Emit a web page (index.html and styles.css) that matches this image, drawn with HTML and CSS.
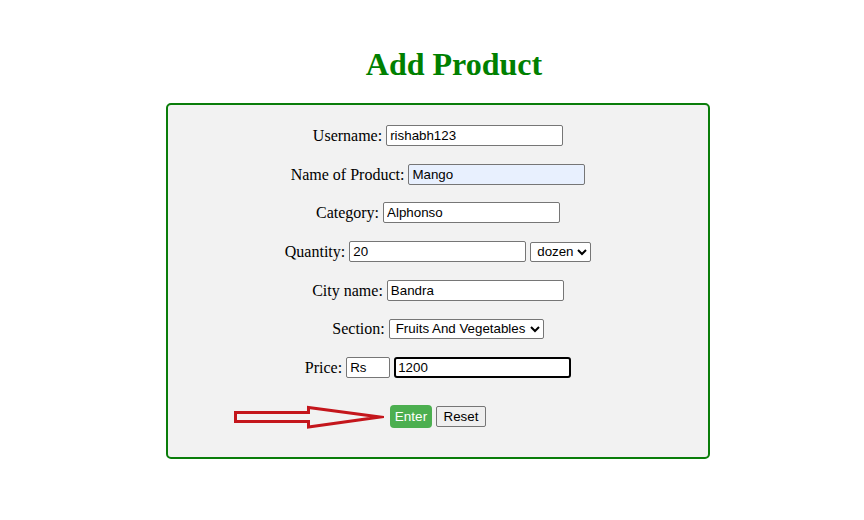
FILE: index.html
```html
<!DOCTYPE html>
<html>
<head>
<meta charset="utf-8">
<link rel="stylesheet" href="styles.css">
</head>
<body>
<h1 class="title">Add Product</h1>
<form class="box">
  <div class="row"><label>Username:</label><input class="field" type="text" value="rishabh123"></div>
  <div class="row"><label>Name of Product:</label><input class="field autofill" type="text" value="Mango"></div>
  <div class="row"><label>Category:</label><input class="field" type="text" value="Alphonso"></div>
  <div class="row"><label>Quantity:</label><input class="field" type="text" value="20"><select class="sel sel-unit"><option>dozen</option></select></div>
  <div class="row"><label>City name:</label><input class="field" type="text" value="Bandra"></div>
  <div class="row"><label>Section:</label><select class="sel sel-section"><option>Fruits And Vegetables</option></select></div>
  <div class="row"><label>Price:</label><input class="field small" type="text" value="Rs"><input class="field focused" type="text" value="1200" autofocus></div>
  <div class="row buttons"><button type="button" class="btn-enter">Enter</button><button type="button" class="btn-reset">Reset</button></div>
  <svg class="arrow" width="152" height="28" viewBox="0 0 152 28">
    <polygon points="3.5,9.5 76.5,9.5 76.5,4.5 148,14 76.5,24 76.5,18.5 3.5,18.5" fill="none" stroke="#c4161c" stroke-width="3" stroke-miterlimit="10"/>
  </svg>
</form>
</body>
</html>
```
FILE: styles.css
```css
html, body {
  margin: 0;
  padding: 0;
  background: #ffffff;
}
body {
  font-family: "Liberation Serif", "Times New Roman", serif;
  font-size: 16px;
  color: #000;
}
.title {
  margin: 46px 0 20px 0;
  padding-left: 44px;
  text-align: center;
  font-family: "Liberation Serif", "Times New Roman", serif;
  font-weight: bold;
  font-size: 32px;
  line-height: 37px;
  color: #008000;
}
.box {
  position: relative;
  box-sizing: border-box;
  width: 544px;
  margin: 0 0 0 166px;
  padding: 20px 0 28px 0;
  border: 2px solid #0a7d0a;
  border-radius: 5px;
  background: #f2f2f2;
  display: flex;
  flex-direction: column;
  gap: 17.7px;
}
.row {
  display: flex;
  justify-content: center;
  align-items: center;
  gap: 4px;
  height: 21px;
}
.row label {
  line-height: 21px;
}
.field {
  box-sizing: border-box;
  width: 177px;
  height: 21px;
  margin: 0;
  padding: 1px 3px;
  border: 1px solid #767676;
  border-radius: 2px;
  background: #fff;
  font-family: "Liberation Sans", Arial, sans-serif;
  font-size: 13.33px;
  color: #000;
}
.autofill {
  background: #e8f0fe;
}
.small {
  width: 44px;
}
.focused {
  border: 2px solid #000;
  border-radius: 3px;
  padding: 0 2px;
}
.focused:focus {
  outline: none;
}
.sel {
  box-sizing: border-box;
  height: 20px;
  margin: 0;
  padding: 0 0 0 2px;
  border: 1px solid #767676;
  border-radius: 2px;
  background: #fff;
  font-family: "Liberation Sans", Arial, sans-serif;
  font-size: 13.33px;
  color: #000;
}
.sel-unit {
  width: 61px;
}
.sel-section {
  width: 155px;
}
.buttons {
  margin-top: 9px;
  height: 24px;
}
.btn-enter {
  box-sizing: border-box;
  width: 42px;
  height: 23px;
  margin: 0;
  padding: 0;
  border: none;
  border-radius: 4px;
  background: #4caf50;
  color: #fff;
  font-family: "Liberation Sans", Arial, sans-serif;
  font-size: 13.5px;
}
.btn-reset {
  box-sizing: border-box;
  width: 50px;
  height: 21px;
  margin: 0;
  padding: 0;
  border: 1px solid #767676;
  border-radius: 2px;
  background: #efefef;
  color: #000;
  font-family: "Liberation Sans", Arial, sans-serif;
  font-size: 13.33px;
}
.arrow {
  position: absolute;
  left: 64px;
  top: 298px;
}
```
